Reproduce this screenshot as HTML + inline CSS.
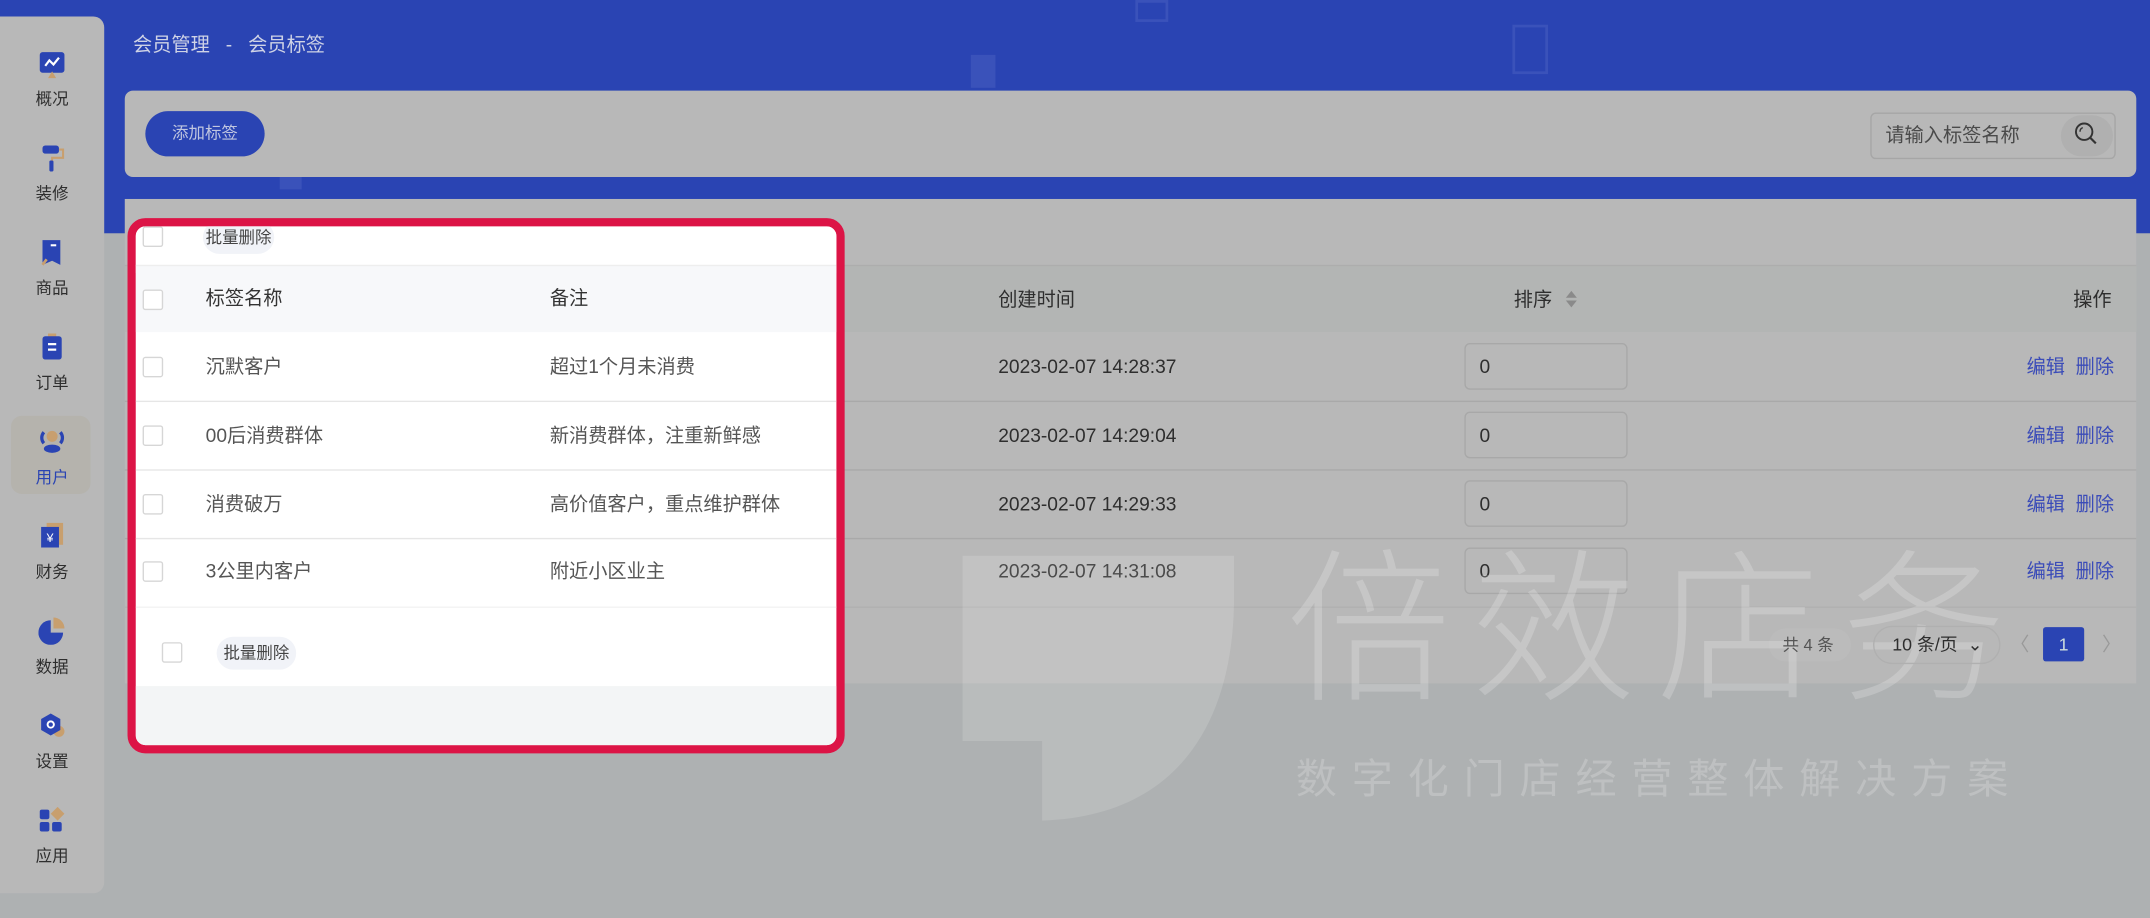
<!DOCTYPE html>
<html><head><meta charset="utf-8"><style>
*{margin:0;padding:0;box-sizing:border-box}
html,body{width:2150px;height:918px;overflow:hidden;background:#aeb1b2}
#s{position:absolute;left:0;top:0;width:1568px;height:669px;transform-origin:0 0;transform:scale(1.37117,1.3722);font-family:"Liberation Sans","Noto Sans CJK SC",sans-serif;color:#2e2e2e;font-size:14px;background:#aeb1b2;overflow:hidden}
.a{position:absolute}
.t{position:absolute;white-space:nowrap;line-height:1}
.cb{position:absolute;width:15px;height:15px;border:1px solid #a4a4a4;border-radius:2px}
.cbw{border-color:#d6d6d6;background:#fff}
.nav{position:absolute;left:0;width:76px;text-align:center;font-size:12px;color:#2e2e2e}
.ic{position:absolute;left:28px;width:20px;height:20px}
.inp{position:absolute;left:1068px;width:119px;height:34px;border:1px solid #a8a8a8;border-radius:4px;padding:9px 10px;font-size:14px;line-height:1}
.op{position:absolute;color:#3b4cb8;font-size:14px;line-height:1}
</style></head><body><div id="s">
<div class="a" style="left:0;top:0;width:1568px;height:170px;background:#2a44b3"></div>
<div class="a" style="left:828px;top:0;width:24px;height:16px;border:2px solid #3a52ba"></div>
<div class="a" style="left:1103px;top:18px;width:26px;height:36px;border:2px solid #3a52ba"></div>
<div class="a" style="left:708px;top:40px;width:18px;height:24px;background:#3a52ba"></div>
<div class="a" style="left:204px;top:128px;width:16px;height:10px;background:#3a52ba"></div>
<div class="a" style="left:0;top:12px;width:76px;height:639px;background:#b8b8b8;border-radius:0 8px 8px 0"></div>
<div class="a" style="left:8px;top:303px;width:58px;height:57px;background:#b5b3ad;border-radius:8px"></div>
<svg class="ic" style="top:37px" viewBox="0 0 20 20"><rect x="1" y="1" width="18" height="15" rx="2" fill="#2a44b3"/><path d="M5 11l3-4 3 3 4-5" stroke="#fff" stroke-width="1.6" fill="none"/><path d="M7 20l3-5 3 5z" fill="#c89f6e"/></svg>
<div class="nav t" style="top:66px">概况</div>
<svg class="ic" style="top:105px" viewBox="0 0 20 20"><rect x="3" y="1" width="12" height="6" rx="2" fill="#2a44b3"/><path d="M15 4h3v6h-8v3" stroke="#c89f6e" stroke-width="1.5" fill="none"/><rect x="8" y="12" width="3" height="8" rx="1" fill="#2a44b3"/></svg>
<div class="nav t" style="top:135px">装修</div>
<svg class="ic" style="top:174px" viewBox="0 0 20 20"><path d="M3 1h13v18l-6-3-7 3z" fill="#2a44b3"/><path d="M3 19l3-4" stroke="#c89f6e" stroke-width="2"/><rect x="9" y="4" width="4" height="1.5" fill="#fff"/></svg>
<div class="nav t" style="top:204px">商品</div>
<svg class="ic" style="top:243px" viewBox="0 0 20 20"><rect x="7" y="0" width="6" height="3" fill="#c89f6e"/><rect x="3" y="2" width="14" height="17" rx="2" fill="#2a44b3"/><rect x="7" y="7" width="6" height="1.6" fill="#fff"/><rect x="7" y="11" width="6" height="1.6" fill="#fff"/></svg>
<div class="nav t" style="top:273px">订单</div>
<svg class="ic" style="top:312px" viewBox="0 0 20 20"><circle cx="10" cy="6" r="4" fill="#c89f6e"/><path d="M4 3a6 6 0 0 0 0 8M16 3a6 6 0 0 1 0 8" stroke="#2a44b3" stroke-width="2.4" fill="none"/><ellipse cx="10" cy="15" rx="6" ry="3" fill="#2a44b3"/></svg>
<div class="nav t" style="top:342px;color:#2a44b3">用户</div>
<svg class="ic" style="top:381px" viewBox="0 0 20 20"><rect x="6" y="0" width="12" height="16" fill="#c89f6e"/><rect x="2" y="3" width="13" height="15" fill="#2a44b3"/><text x="8.5" y="14" font-size="9" fill="#fff" text-anchor="middle" font-family="Liberation Sans">¥</text></svg>
<div class="nav t" style="top:411px">财务</div>
<svg class="ic" style="top:450px" viewBox="0 0 20 20"><path d="M9 2a9 9 0 1 0 9 9h-9z" fill="#2a44b3"/><path d="M11 0a8 8 0 0 1 8 8h-8z" fill="#c89f6e"/></svg>
<div class="nav t" style="top:480px">数据</div>
<svg class="ic" style="top:519px" viewBox="0 0 20 20"><circle cx="15" cy="14" r="4" fill="#c89f6e"/><path d="M9 1l7 4v8l-7 4-7-4V5z" fill="#2a44b3"/><circle cx="9" cy="9" r="3" fill="#fff"/><circle cx="9" cy="9" r="1.6" fill="#2a44b3"/></svg>
<div class="nav t" style="top:549px">设置</div>
<svg class="ic" style="top:588px" viewBox="0 0 20 20"><rect x="1" y="2" width="7" height="7" rx="1.5" fill="#2a44b3"/><rect x="1" y="11" width="7" height="7" rx="1.5" fill="#2a44b3"/><rect x="10" y="11" width="7" height="7" rx="1.5" fill="#2a44b3"/><path d="M14 0l5 5-5 5-5-5z" fill="#c89f6e"/></svg>
<div class="nav t" style="top:618px">应用</div>
<div class="t" style="left:97px;top:25px;color:#cfd3e6;font-size:14px">会员管理&nbsp;&nbsp;&nbsp;-&nbsp;&nbsp;&nbsp;会员标签</div>
<div class="a" style="left:91px;top:66px;width:1467px;height:63px;background:#b8b8b8;border-radius:6px"></div>
<div class="a" style="left:106px;top:81px;width:87px;height:33px;background:#2a44b3;border-radius:17px;color:#c0c6e0;font-size:12px;line-height:33px;text-align:center">添加标签</div>
<div class="a" style="left:1364px;top:82px;width:179px;height:34px;border:1px solid #a6a6a6;border-radius:4px"></div>
<div class="t" style="left:1375px;top:91px;color:#4a4a4a">请输入标签名称</div>
<div class="a" style="left:1503px;top:84px;width:38px;height:30px;background:#b0b0b0;border-radius:15px"></div>
<svg class="a" style="left:1512px;top:88px" width="20" height="20" viewBox="0 0 20 20"><circle cx="8" cy="8" r="6" stroke="#333" stroke-width="1.4" fill="none"/><path d="M12.5 12.5l4 4" stroke="#333" stroke-width="1.6"/><path d="M5 8a3 3 0 0 1 2-3" stroke="#333" fill="none"/></svg>
<div class="a" style="left:91px;top:145px;width:1467px;height:353px;background:#b8b8b8"></div>
<div class="a" style="left:91px;top:193px;width:1467px;height:49px;background:#b3b5b4;border-top:1px solid #adadad"></div>
<div class="a" style="left:91px;top:292px;width:1467px;height:1px;background:#a9a9a9"></div>
<div class="a" style="left:91px;top:342px;width:1467px;height:1px;background:#a9a9a9"></div>
<div class="a" style="left:91px;top:392px;width:1467px;height:1px;background:#a9a9a9"></div>
<div class="a" style="left:91px;top:442px;width:1467px;height:1px;background:#b0b0b0"></div>
<div class="t" style="left:728px;top:211px">创建时间</div>
<div class="t" style="left:1104px;top:211px">排序</div>
<svg class="a" style="left:1141px;top:211px" width="10" height="14"><path d="M1 6l4-5 4 5z" fill="#8a8a8a"/><path d="M1 8l4 5 4-5z" fill="#8a8a8a"/></svg>
<div class="t" style="left:1512px;top:211px">操作</div>
<div class="t" style="left:728px;top:260px">2023-02-07 14:28:37</div>
<div class="t" style="left:728px;top:310px">2023-02-07 14:29:04</div>
<div class="t" style="left:728px;top:360px">2023-02-07 14:29:33</div>
<div class="t" style="left:728px;top:409px">2023-02-07 14:31:08</div>
<div class="inp" style="top:250px">0</div>
<div class="inp" style="top:300px">0</div>
<div class="inp" style="top:350px">0</div>
<div class="inp" style="top:399px">0</div>
<div class="op" style="left:1478px;top:260px">编辑&nbsp;&nbsp;删除</div>
<div class="op" style="left:1478px;top:310px">编辑&nbsp;&nbsp;删除</div>
<div class="op" style="left:1478px;top:360px">编辑&nbsp;&nbsp;删除</div>
<div class="op" style="left:1478px;top:409px">编辑&nbsp;&nbsp;删除</div>
<svg class="a" style="left:700px;top:400px" width="205" height="200" viewBox="0 0 205 200"><path d="M2 5h198v30c0 90-40 160-140 163V140H2z" fill="rgba(255,255,255,0.14)"/></svg>
<div class="t" style="left:938px;top:400px;font-size:120px;color:rgba(255,255,255,0.2);letter-spacing:15px;font-weight:300">倍效店务</div>
<div class="t" style="left:945px;top:554px;font-size:30px;color:rgba(255,255,255,0.2);letter-spacing:10.8px">数字化门店经营整体解决方案</div>
<div class="a" style="left:1290px;top:458px;width:60px;height:24px;border-radius:12px;background:rgba(255,255,255,0.05)"></div>
<div class="t" style="left:1300px;top:464px;font-size:12px;color:#555">共 4 条</div>
<div class="a" style="left:1366px;top:456px;width:93px;height:28px;border:1px solid #b0b0b0;border-radius:14px"></div>
<div class="t" style="left:1380px;top:463px;font-size:13px">10 条/页&nbsp;&nbsp;⌄</div>
<div class="t" style="left:1466px;top:462px;color:#999;font-size:14px">〈</div>
<div class="a" style="left:1490px;top:457px;width:30px;height:25px;background:#2a44b3;border-radius:2px;color:#cdd;font-size:13px;line-height:25px;text-align:center">1</div>
<div class="t" style="left:1533px;top:462px;color:#999;font-size:14px">〉</div>
<div class="a" style="left:93px;top:159px;width:523px;height:390px;border:6px solid #dc1446;border-radius:13px;background:#fff;overflow:hidden">
 <div class="a" style="left:0;top:0;width:511px;height:34px;background:#fff"></div>
 <div class="cb cbw" style="left:5px;top:0px"></div>
 <div class="a" style="left:49px;top:-4px;width:52px;height:24px;border-radius:12px;background:#f1f3f8;font-size:12px;color:#444;line-height:24px;text-align:center">批量删除</div>
 <div class="a" style="left:0;top:28px;width:511px;height:49px;background:#f7f8fa;border-top:1px solid #eee"></div>
 <div class="cb cbw" style="left:5px;top:46px"></div>
 <div class="t" style="left:51px;top:45px;color:#333">标签名称</div>
 <div class="t" style="left:302px;top:45px;color:#333">备注</div>
 <div class="a" style="left:0;top:127px;width:511px;height:1px;background:#e6e6e6"></div>
 <div class="a" style="left:0;top:177px;width:511px;height:1px;background:#e6e6e6"></div>
 <div class="a" style="left:0;top:227px;width:511px;height:1px;background:#e6e6e6"></div>
 <div class="a" style="left:0;top:277px;width:511px;height:1px;background:#f3f3f3"></div>
 <div class="cb cbw" style="left:5px;top:95px"></div><div class="t" style="left:51px;top:95px;color:#555">沉默客户</div><div class="t" style="left:302px;top:95px;color:#555">超过1个月未消费</div>
 <div class="cb cbw" style="left:5px;top:145px"></div><div class="t" style="left:51px;top:145px;color:#555">00后消费群体</div><div class="t" style="left:302px;top:145px;color:#555">新消费群体，注重新鲜感</div>
 <div class="cb cbw" style="left:5px;top:195px"></div><div class="t" style="left:51px;top:195px;color:#555">消费破万</div><div class="t" style="left:302px;top:195px;color:#555">高价值客户，重点维护群体</div>
 <div class="cb cbw" style="left:5px;top:244px"></div><div class="t" style="left:51px;top:244px;color:#555">3公里内客户</div><div class="t" style="left:302px;top:244px;color:#555">附近小区业主</div>
 <div class="cb cbw" style="left:19px;top:303px"></div>
 <div class="a" style="left:59px;top:299px;width:58px;height:24px;border-radius:12px;background:#f1f3f8;font-size:12px;color:#444;line-height:24px;text-align:center">批量删除</div>
 <div class="a" style="left:0;top:335px;width:511px;height:50px;background:#f3f5f6"></div>
</div>
</div></body></html>
